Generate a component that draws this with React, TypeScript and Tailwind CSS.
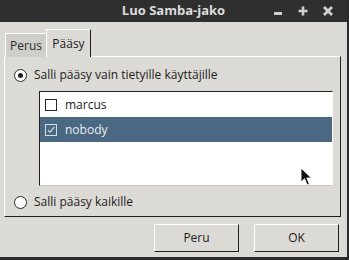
const users = [
  { name: "marcus", checked: false },
  { name: "nobody", checked: true },
];

function Radio({ on }: { on: boolean }) {
  return (
    <span className="flex size-[13px] shrink-0 items-center justify-center rounded-full border border-[#2a2a2a] bg-white">
      {on && <span className="size-[5px] rounded-full bg-[#1e1e1e]" />}
    </span>
  );
}

function Check({ on }: { on: boolean }) {
  return (
    <span
      className={`flex size-[12px] shrink-0 items-center justify-center border ${
        on ? "border-[#d6dde4]" : "border-[#2a2a2a] bg-white"
      }`}
    >
      {on && (
        <svg width="10" height="10" viewBox="0 0 10 10">
          <path d="M2 5.2 L4.1 7.3 L8.2 2.2" fill="none" stroke="#e4e9ee" strokeWidth="1.1" />
        </svg>
      )}
    </span>
  );
}

export default function App() {
  return (
    <div className="relative flex h-[260px] w-[349px] flex-col overflow-hidden border-r-2 border-b-[3px] border-[#2a2a2a] bg-[#dcdad5] font-['Open_Sans',sans-serif] text-[12px] text-[#1c1c1c]">
      <div className="flex h-[22px] shrink-0 items-center bg-[#2f2f2f]">
        <div className="w-[80px]" />
        <div className="flex-1 text-center text-[13px] font-bold text-[#dcdcdc]">Luo Samba-jako</div>
        <div className="flex w-[80px] items-center gap-[13px] pl-[5px] text-[#d0d0d0]">
          <svg width="12" height="12" viewBox="0 0 12 12">
            <rect x="2" y="7" width="8" height="3" fill="#d0d0d0" />
          </svg>
          <svg width="12" height="12" viewBox="0 0 12 12">
            <path d="M6 1.5 V10.5 M1.5 6 H10.5" stroke="#d0d0d0" strokeWidth="2.6" />
          </svg>
          <svg width="12" height="12" viewBox="0 0 12 12">
            <path d="M2 2 L10 10 M10 2 L2 10" stroke="#d0d0d0" strokeWidth="2.8" />
          </svg>
        </div>
      </div>

      <div className="flex flex-1 flex-col pt-[7px] pr-[6px] pl-[4px]">
        <div className="relative z-10 -mb-px flex h-[28px] items-end pl-px">
          <div className="flex h-[24px] w-[41px] items-center justify-center border-t border-l border-white bg-[#d0cec9] pt-[1px] text-[#2a2a2a]">
            Perus
          </div>
          <div className="flex h-[28px] w-[45px] items-center justify-center border-t border-l border-r border-t-white border-l-white border-r-[#1f1f1f] bg-[#dcdad5]">
            Pääsy
          </div>
        </div>

        <div className="flex h-[161px] w-[337px] flex-col border-t border-l border-r border-b border-t-white border-l-white border-r-[#1f1f1f] border-b-[#1f1f1f] pt-[8px] pl-[8px]">
          <div className="flex h-[20px] items-center gap-[7px] pl-px">
            <Radio on={true} />
            <span>Salli pääsy vain tietyille käyttäjille</span>
          </div>
          <div className="mt-[6px] ml-[26px] flex h-[95px] w-[294px] flex-col border-t border-l border-r border-b border-t-[#1f1f1f] border-l-[#1f1f1f] border-r-white border-b-[#c8c6c1] bg-white">
            {users.map((u) => (
              <div
                key={u.name}
                className={`flex h-[25px] items-center gap-[8px] pl-[5px] ${
                  u.checked ? "bg-[#4b6883] text-[#e8edf2]" : ""
                }`}
              >
                <Check on={u.checked} />
                <span>{u.name}</span>
              </div>
            ))}
          </div>
          <div className="mt-[6px] flex h-[20px] items-center gap-[7px] pl-px">
            <Radio on={false} />
            <span>Salli pääsy kaikille</span>
          </div>
        </div>

        <div className="mt-[7px] flex justify-end gap-[15px] pr-[2px]">
          {["Peru", "OK"].map((b) => (
            <div
              key={b}
              className="flex h-[28px] w-[85px] items-center justify-center border-t border-l border-r border-b border-t-white border-l-white border-r-[#1f1f1f] border-b-[#1f1f1f] bg-[#dcdad5]"
            >
              {b}
            </div>
          ))}
        </div>
      </div>

      <svg className="absolute top-[167px] left-[300px]" width="13" height="20" viewBox="0 0 13 20">
        <path d="M1 1 L1 15 L4.5 11.8 L7.2 18 L9.4 17 L6.8 11 L11.5 11 Z" fill="#111" stroke="#fff" strokeWidth="0.9" />
      </svg>
    </div>
  );
}
